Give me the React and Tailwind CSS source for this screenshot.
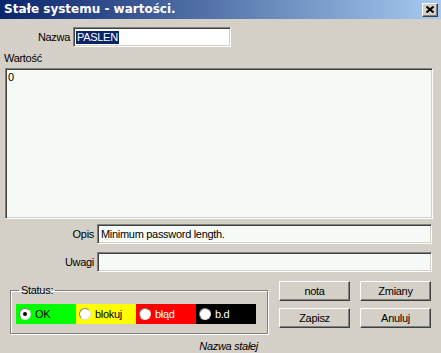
const sunken =
  "border border-t-[#808080] border-l-[#808080] border-b-white border-r-white shadow-[inset_1px_1px_0_#404040,inset_-1px_-1px_0_#d4d0c8]";
const raised =
  "border border-t-white border-l-white border-b-[#404040] border-r-[#404040] shadow-[inset_-1px_-1px_0_#808080]";

const Radio = ({ checked }) => (
  <span className="w-[12px] h-[12px] rounded-full bg-white border border-t-[#808080] border-l-[#808080] border-b-[#e0e0e0] border-r-[#e0e0e0] flex items-center justify-center shrink-0">
    {checked && <span className="w-[4px] h-[4px] rounded-full bg-black" />}
  </span>
);

const StatusCell = ({ label, bg, text, checked }) => (
  <div className={`w-[60px] h-[20px] flex items-center gap-[4px] pl-[3px] ${bg} ${text}`}>
    <Radio checked={checked} />
    <span>{label}</span>
  </div>
);

const Button = ({ children }) => (
  <button className={`h-[20px] w-[71px] bg-[#d4d0c8] text-black ${raised}`}>
    {children}
  </button>
);

const App = () => {
  return (
    <div
      className="w-[441px] h-[353px] bg-[#d4d0c8] flex flex-col text-[11px] leading-[13px] tracking-[-0.3px] text-black overflow-hidden"
      style={{ fontFamily: '"Liberation Sans", Arial, sans-serif' }}
    >
      <div className="h-[19px] bg-[linear-gradient(to_right,#0a246a,#a6caf0)] flex items-center justify-between pl-[4px] pr-[3px]">
        <span
          className="text-white font-bold text-[12px] tracking-normal"
          style={{ fontFamily: '"DejaVu Sans", Verdana, sans-serif' }}
        >
          Stałe systemu - wartości.
        </span>
        <span className={`w-[16px] h-[14px] bg-[#d4d0c8] flex items-center justify-center ${raised}`}>
          <svg width="8" height="7" viewBox="0 0 8 7">
            <path d="M0.5 0.5 L7.5 6.5 M7.5 0.5 L0.5 6.5" stroke="black" strokeWidth="2" />
          </svg>
        </span>
      </div>

      <div className="flex items-center mt-[8px]">
        <span className="w-[73px] text-right pr-[3px]">Nazwa</span>
        <div className={`w-[158px] h-[20px] bg-white flex items-center pl-[2px] ${sunken}`}>
          <span className="bg-[#0a246a] text-white px-[1px]">PASLEN</span>
        </div>
      </div>

      <span className="ml-[4px] mt-[5px]">Wartość</span>
      <div className={`ml-[5px] mt-[3px] w-[428px] h-[151px] bg-[#f5faf6] px-[2px] pt-[2px] ${sunken}`}>
        0
      </div>

      <div className="flex items-center mt-[5px]">
        <span className="w-[97px] text-right pr-[3px]">Opis</span>
        <div className={`w-[335px] h-[20px] bg-[#f5faf6] flex items-center pl-[3px] ${sunken}`}>
          Minimum password length.
        </div>
      </div>
      <div className="flex items-center mt-[8px]">
        <span className="w-[97px] text-right pr-[3px]">Uwagi</span>
        <div className={`w-[335px] h-[20px] bg-[#f5faf6] ${sunken}`} />
      </div>

      <div className="flex mt-[9px]">
        <div className="flex flex-col ml-[10px] mt-[3px]">
          <fieldset className="w-[258px] h-[50px] border border-[#808080] shadow-[1px_1px_0_white,inset_1px_1px_0_white] px-[5px] pt-[7px]">
            <legend className="ml-[3px] px-[2px]">Status:</legend>
            <div className="flex">
              <StatusCell label="OK" bg="bg-[#00ff00]" text="text-black" checked />
              <StatusCell label="blokuj" bg="bg-[#ffff00]" text="text-black" />
              <StatusCell label="błąd" bg="bg-[#ff0000]" text="text-white" />
              <StatusCell label="b.d" bg="bg-black" text="text-white" />
            </div>
          </fieldset>
          <span className="self-end italic mt-[6px] mr-[10px]">Nazwa stałej</span>
        </div>
        <div className="grid grid-cols-2 gap-x-[10px] gap-y-[7px] ml-[11px] h-fit">
          <Button>nota</Button>
          <Button>Zmiany</Button>
          <Button>Zapisz</Button>
          <Button>Anuluj</Button>
        </div>
      </div>
    </div>
  );
};

export default App;
